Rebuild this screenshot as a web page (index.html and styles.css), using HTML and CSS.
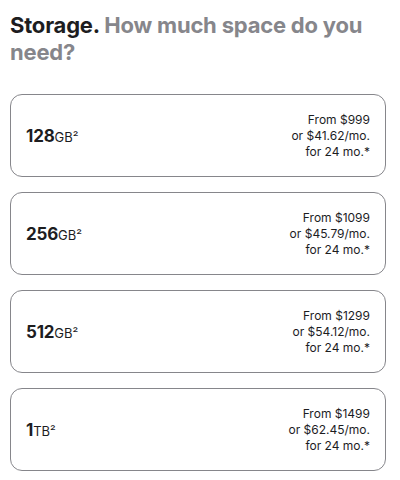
FILE: index.html
```html
<!DOCTYPE html>
<html lang="en">
<head>
<meta charset="utf-8">
<title>Storage</title>
<link rel="stylesheet" href="styles.css">
</head>
<body>
<main class="storage">
  <h2 class="storage-title">Storage. <span class="storage-sub">How much space do you need?</span></h2>
  <ul class="options">
    <li class="option">
      <span class="capacity">128<span class="unit">GB²</span></span>
      <span class="price">From $999<br>or $41.62/mo.<br>for 24 mo.*</span>
    </li>
    <li class="option">
      <span class="capacity">256<span class="unit">GB²</span></span>
      <span class="price">From $1099<br>or $45.79/mo.<br>for 24 mo.*</span>
    </li>
    <li class="option">
      <span class="capacity">512<span class="unit">GB²</span></span>
      <span class="price">From $1299<br>or $54.12/mo.<br>for 24 mo.*</span>
    </li>
    <li class="option">
      <span class="capacity">1<span class="unit">TB²</span></span>
      <span class="price">From $1499<br>or $62.45/mo.<br>for 24 mo.*</span>
    </li>
  </ul>
</main>
</body>
</html>
```

FILE: styles.css
```css
* { box-sizing: border-box; }

html, body {
  margin: 0;
  background: #fff;
}

body {
  font-family: Inter, "Liberation Sans", sans-serif;
  color: #1d1d1f;
  padding: 12px 14px 0 10px;
}

.storage-title {
  margin: 0 0 28px;
  font-size: 22px;
  line-height: 27px;
  font-weight: 700;
  letter-spacing: -0.2px;
  color: #1d1d1f;
}

.storage-sub {
  color: #86868b;
}

.options {
  list-style: none;
  margin: 0;
  padding: 0;
  display: flex;
  flex-direction: column;
  gap: 15px;
}

.option {
  display: flex;
  align-items: center;
  justify-content: space-between;
  height: 83px;
  padding: 0 15px 0 15px;
  border: 1px solid #86868b;
  border-radius: 12px;
}

.capacity {
  font-size: 17px;
  font-weight: 700;
  letter-spacing: -0.2px;
}

.unit {
  font-size: 13px;
  font-weight: 400;
  letter-spacing: 0;
}

.price {
  font-size: 12px;
  line-height: 16px;
  text-align: right;
  color: #1d1d1f;
}
```
